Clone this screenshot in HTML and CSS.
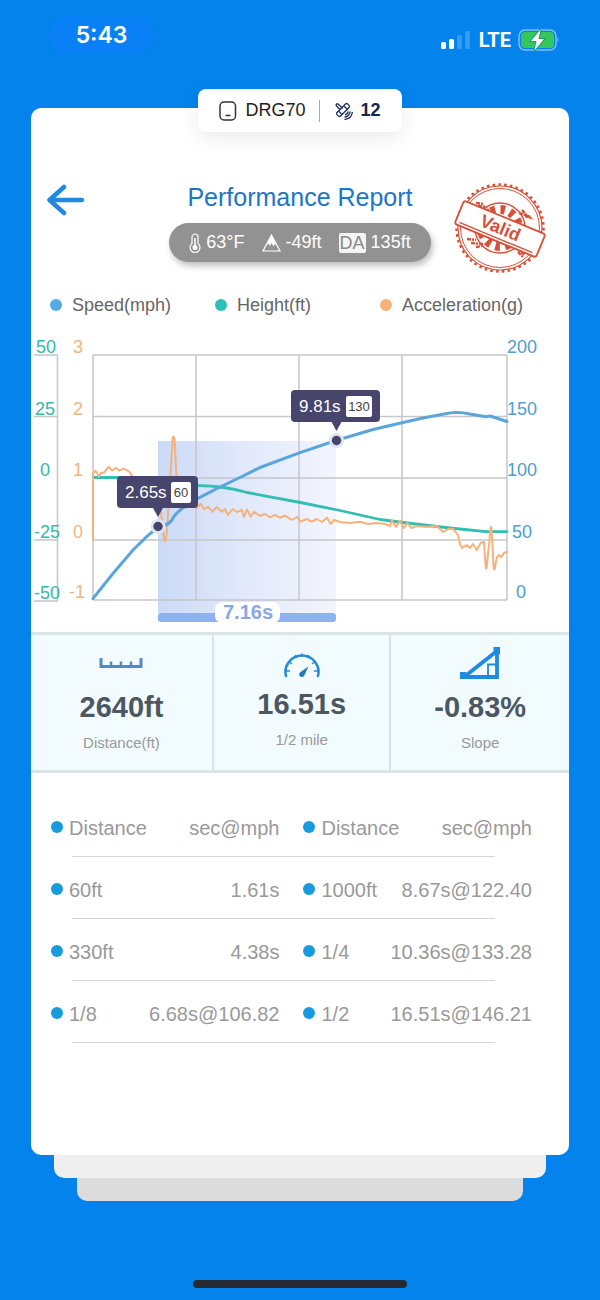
FILE: index.html
```html
<!DOCTYPE html>
<html lang="en">
    <head>
        <meta charset="utf-8">
        <meta name="viewport" content="width=device-width, initial-scale=1">
        <title>Performance Report</title>
        <link rel="stylesheet" href="styles.css">
    </head>

    <body>

        <div class="statusBar">
            <span class="clock">5:43</span>
            <div class="statusIcons">
                <svg class="signal" width="31" height="20" viewBox="0 0 31 20" fill="#fff">
                    <rect x="0" y="12" width="5" height="7" rx="1.5"/>
                    <rect x="8" y="9" width="5" height="10" rx="1.5"/>
                    <rect x="16" y="5" width="5" height="14" rx="1.5" opacity=".2"/>
                    <rect x="24" y="1" width="5" height="18" rx="1.5" opacity=".2"/>
                </svg>
                <span class="network">LTE</span>
                <svg width="42" height="24" viewBox="0 0 42 24">
                    <rect x="1" y="2" width="37" height="20" rx="6" fill="none" stroke="#7fc0ee" stroke-width="1.5"/>
                    <rect x="3" y="4" width="33" height="16" rx="4" fill="#34c759"/>
                    <path d="M39.5 9.500q2 2.500 0 5z" fill="#7fc0ee"/>
                    <path d="M22.5 1.5 13 13h5.5L16.5 22.5 26 11h-5.5z" fill="#fff" stroke="#1c9c7c" stroke-width="2" paint-order="stroke"/>
                </svg>
            </div>
        </div>

        <main class="card">

            <div class="deviceTab">
                <svg width="18" height="20" viewBox="0 0 18 20" fill="none" stroke="#333" stroke-width="1.5">
                    <rect x="1" y="1" width="15.5" height="18" rx="4"/>
                    <path d="M6.5 14.5h5"/>
                </svg>
                <span>DRG70</span>
                <span class="divider"></span>
                <svg width="18" height="18" viewBox="0 0 18 18" fill="none" stroke="#1d3158" stroke-width="1.3" stroke-linecap="round">
                    <rect x="-2.5" y="-7.5" width="5" height="15" rx="1.5" transform="translate(8 8) rotate(45)"/>
                    <path d="M5 7.500 1.500 4q-.8-1 0-1.800t1.800 0L7.500 6M9.500 4.500l3 3M4 9.500l3 3"/>
                    <path d="M10.500 12.500q2-.5 2.500-2.500M10 15q4-.5 5-5M10 17.300q6.500-.8 7.300-7"/>
                </svg>
                <b class="satellites">12</b>
            </div>

            <header class="reportHead">
                <button class="back" type="button" aria-label="Back">
                    <svg width="44" height="44" viewBox="0 0 44 44" fill="none" stroke="#2089e0" stroke-width="4.5" stroke-linecap="round" stroke-linejoin="round">
                        <path d="M35 22H3M17 9 2.500 22 17 35"/>
                    </svg>
                </button>

                <div class="heading">
                    <h1>Performance Report</h1>
                    <div class="conditions">
                        <span class="condition">
                            <svg width="12" height="20" viewBox="0 0 12 20" fill="none" stroke="#fff" stroke-width="1.2">
                                <path d="M3 10.500V4a3 3 0 0 1 6 0v6.500a5 5 0 1 1-6 0z"/>
                                <path d="M6 5v9" stroke-width="1.5"/>
                                <circle cx="6" cy="14.5" r="2.5" fill="#fff" stroke="none"/>
                            </svg>
                            63°F
                        </span>
                        <span class="condition">
                            <svg width="19" height="18" viewBox="0 0 19 18">
                                <path d="M9.500 1 18 17H1z" fill="none" stroke="#fff" stroke-width="1.2"/>
                                <path d="M9.500 1 4.500 11.500 6.500 9.500 8 12l1.500-3 2 3.500 1-2.500 2 1.500z" fill="#fff"/>
                            </svg>
                            -49ft
                        </span>
                        <span class="condition"><span class="da">DA</span> 135ft</span>
                    </div>
                </div>

                <svg class="stamp" width="104" height="102" viewBox="0 0 104 102" fill="none" stroke="#d6503a">
                    <circle cx="51" cy="50" r="43.5" stroke-width="2.5" stroke-dasharray="2.6 3.2"/>
                    <circle cx="51" cy="50" r="42" stroke-width="1.2"/>
                    <circle cx="51" cy="50" r="39.5" stroke-width="1"/>
                    <circle cx="51" cy="50" r="25" stroke-width="1.4"/>
                    <circle cx="51" cy="50" r="18.5" stroke-width="9" stroke-dasharray="4.5 5.180"/>
                    <path d="M27 25l8 1M29 28l9 1M33 31l7 1M70 35l12 4M73 32l6 7M76 38l8 3M18 61l9 1M22 65l12 1M27 69l6-1M66 69l10 8M69 74l5 5M71 71l7 1" stroke-width="2.4" stroke-dasharray="4 1 2 1"/>
                    <g transform="translate(51 51) rotate(22.5)">
                        <rect x="-44" y="-12.5" width="88" height="25" rx="2.5" fill="#fff" stroke-width="1.8"/>
                        <path d="M-40 9.500h79" stroke-width="1.4"/>
                        <text class="stampText" x="0" y="5" text-anchor="middle">Valid</text>
                    </g>
                </svg>
            </header>

            <ul class="legend">
                <li class="speed">Speed(mph)</li>
                <li class="height">Height(ft)</li>
                <li class="accel">Acceleration(g)</li>
            </ul>

            <svg class="chart" viewBox="31 316 538 316" role="img" aria-label="Speed, height and acceleration over time">
                <defs>
                    <linearGradient id="span">
                        <stop offset="0" stop-color="#cbdaf7"/>
                        <stop offset=".5" stop-color="#e2e9fb"/>
                        <stop offset="1" stop-color="#f3f5fe"/>
                    </linearGradient>
                </defs>

                <!-- highlighted 60-130 range -->
                <rect x="158" y="441" width="178" height="172" fill="url(#span)"/>

                <path class="grid" d="M93 355H507M93 416.500H507M93 478H507M93 540H507M93 600H507M93 355V600M196 355V600M299 355V600M402 355V600M507 355V600"/>
                <path class="grid" d="M57.500 355V601M34 355H58M34 416.500H58M34 540H58M34 601H58"/>

                <!-- height axis -->
                <g class="axis heightAxis">
                    <text x="46" y="353">50</text>
                    <text x="45" y="415">25</text>
                    <text x="45" y="476">0</text>
                    <text x="47" y="538">-25</text>
                    <text x="47" y="599">-50</text>
                </g>
                <!-- acceleration axis -->
                <g class="axis accelAxis">
                    <text x="78" y="353">3</text>
                    <text x="78" y="415">2</text>
                    <text x="78" y="476">1</text>
                    <text x="78" y="538">0</text>
                    <text x="77" y="598">-1</text>
                </g>
                <!-- speed axis -->
                <g class="axis speedAxis">
                    <text x="522" y="353">200</text>
                    <text x="522" y="415">150</text>
                    <text x="522" y="476">100</text>
                    <text x="522" y="538">50</text>
                    <text x="521" y="598">0</text>
                </g>

                <path class="line" stroke="#32beb2" stroke-width="2.8" d="M93 477.500H125C150 479 175 483 198 485.500Q225 486 247 492.500L303 503 340 510.500 380 519.500 403 522.500 450 528 486 531.700H507"/>
                <path class="line" stroke="#f6b27c" stroke-width="2" d="M93 540V473L95.300 470.700 97.700 474 98.700 477 101 472.700 104 472.700 108.700 466.700 112 470.700 115.700 467.700 119.300 470.700 123.300 468.700 129.300 471.700 132.700 476.700 145 480 157 490 162 520 164 538Q165.500 547 167 530L170.500 475 172.500 439Q173.500 434 174.500 439L176.500 477 180 500 185 508 190 504 196.700 508 200.700 503.700 204 509 208 507 212.700 511.700 216.700 507 221.700 511.700 225 509 228 515 232.700 509 236.700 512 242 510 244 517 247 509.500 250.700 516.700 254 511.700 260 516 265 514 270 517.300 275 515 280 517.700 285 515.700 291.700 520 297 517 300.700 521.700 306.700 519 311.700 521.700 316.700 519 322 522 327 517.700 330.700 524 334 520 340 522 350 523 360 521.700 368 524 377 523 385 524 390 526 391.700 520 396 527 400 520.700 404 528 407.300 523 411.700 528 416.700 526 426.700 527 436.700 526 443 532 448 529 453 528.700 458 535 460 544 462 548 466.700 545 470 548 473 544 476.700 550 480.700 543 484 542 485.500 564Q486.300 574 487.200 562L489.500 540Q491 516 492 536L493.500 566Q494.300 574 495.500 564L497 557 499.300 555 501.300 557.300 504 552.700 507 552"/>
                <path class="line" stroke="#5aa5db" stroke-width="3" d="M93 598.500L113 573.500 133 550 146.700 536.700 158 527 164 525.500Q169 524 172 520Q175 513 187 505L200 497.300 217 488.500 243 476 260 467.500 300 452.700 336 440.500 373 429.500 402 422.700 423 418 444 414Q457 411 470 414L486 416.700 490 416 507 421.500"/>

                <!-- elapsed time between the two markers -->
                <rect x="158" y="613" width="178" height="9" rx="3" fill="#8fb1ef"/>
                <rect x="215" y="602" width="65" height="21" rx="7" fill="#fff"/>
                <text class="elapsed" x="248" y="619">7.16s</text>

                <g class="marker">
                    <circle class="halo" cx="158" cy="526.5" r="7.5"/>
                    <circle cx="158" cy="526.5" r="4.7"/>
                    <rect x="117" y="476" width="81" height="32" rx="4"/>
                    <path d="M152.500 507h11l-5.500 10z"/>
                    <rect class="chip" x="171" y="482" width="20" height="21" rx="2"/>
                    <text class="time" x="125" y="498">2.65s</text>
                    <text class="chipText" x="181" y="497">60</text>
                </g>
                <g class="marker">
                    <circle class="halo" cx="336.5" cy="440.5" r="7.5"/>
                    <circle cx="336.5" cy="440.5" r="4.7"/>
                    <rect x="291" y="390" width="89" height="32" rx="4"/>
                    <path d="M331 421h11l-5.500 10z"/>
                    <rect class="chip" x="346" y="396" width="26" height="21" rx="2"/>
                    <text class="time" x="299" y="412">9.81s</text>
                    <text class="chipText" x="359" y="411">130</text>
                </g>
            </svg>

            <section class="metrics">
                <div class="metric">
                    <svg width="44" height="36" viewBox="0 0 44 36" fill="none" stroke="#5288c8">
                        <path d="M2 13v8.500h40V13" stroke-width="3"/>
                        <path d="M12 16.500V21M22 16.500V21M32 16.500V21" stroke-width="2.5"/>
                    </svg>
                    <strong>2640ft</strong>
                    <span>Distance(ft)</span>
                </div>
                <div class="metric raised">
                    <svg width="36" height="36" viewBox="0 0 36 36" fill="none" stroke="#2489d6" stroke-linecap="round">
                        <path d="M2 34A16.500 16.500 0 1 1 34 34" stroke-width="2.5"/>
                        <path d="M2.500 29h3M33.500 29h-3M5.500 20l2 1.500M30.500 20l-2 1.500M11.500 13.500l1 2M24.500 13.500l-1 2M18 12v2.500" stroke-width="1.5"/>
                        <path d="M24.500 24.500 20.500 33a2.700 2.700 0 1 1-4-3z" fill="#2479b8" stroke="none"/>
                    </svg>
                    <strong>16.51s</strong>
                    <span>1/2 mile</span>
                </div>
                <div class="metric">
                    <svg width="40" height="36" viewBox="0 0 40 36" fill="none" stroke="#1f8ae2">
                        <path d="M4 32H37V6z" stroke-width="3.8"/>
                        <path d="M37 19.500H28V31" stroke-width="1.8"/>
                        <path d="M0 27h6v7H0zM33.500 2h6.500v7.500h-6.500z" fill="#1f8ae2" stroke="none"/>
                    </svg>
                    <strong>-0.83%</strong>
                    <span>Slope</span>
                </div>
            </section>

            <table class="splits">
                <colgroup>
                    <col class="name"><col class="result"><col class="nameWide"><col class="result">
                </colgroup>
                <thead>
                    <tr><th scope="col">Distance</th><th scope="col">sec@mph</th><th scope="col">Distance</th><th scope="col">sec@mph</th></tr>
                </thead>
                <tbody>
                    <tr><td>60ft</td><td>1.61s</td><td>1000ft</td><td>8.67s@122.40</td></tr>
                    <tr><td>330ft</td><td>4.38s</td><td>1/4</td><td>10.36s@133.28</td></tr>
                    <tr><td>1/8</td><td>6.68s@106.82</td><td>1/2</td><td>16.51s@146.21</td></tr>
                </tbody>
            </table>

        </main>

        <div class="sheet"></div>
        <div class="sheet sheetBack"></div>

        <div class="homeBar"></div>

    </body>
</html>
```
FILE: styles.css
```css
* {
    box-sizing: border-box;
}

body {
    margin: 0;
    min-height: 100vh;
    display: flex;
    flex-direction: column;
    background-color: #0383eb;
    font-family: "Liberation Sans", Arial, sans-serif;
    font-size: 18px;
    color: #666;
}

svg {
    display: block;
    flex: none;
}

/* Status bar */

.statusBar {
    display: flex;
    justify-content: space-between;
    align-items: flex-start;
    height: 108px;
    padding: 17px 40px 0 50px;
    color: white;
    font-family: Inter, "Liberation Sans", sans-serif;
    font-weight: 600;
}

.clock {
    width: 103px;
    line-height: 36px;
    border-radius: 18px;
    background-color: #0a80f6;
    box-shadow: 0 0 4px #0a80f6;
    text-align: center;
    font-size: 23px;
}

.statusIcons {
    display: flex;
    align-items: center;
    gap: 7px;
    padding-top: 11px;
}

.network {
    font-family: Roboto, sans-serif;
    font-weight: 700;
    font-size: 20px;
    line-height: 24px;
}

/* Report card */

.card {
    flex: 1;
    margin: 0 31px;
    border-radius: 10px;
    background-color: white;
}

.deviceTab {
    display: flex;
    align-items: center;
    gap: 8px;
    width: fit-content;
    height: 43px;
    margin: -19px auto 0;
    padding: 0 21px;
    border-radius: 8px;
    background-color: white;
    box-shadow: 0 6px 20px rgba(0, 0, 0, 0.08);
    color: #222;
}

.divider {
    width: 1px;
    height: 22px;
    margin: 0 7px 0 5px;
    background-color: #aaa;
}

.satellites {
    color: #14264d;
}

.reportHead {
    display: grid;
    grid-template-columns: 1fr auto 1fr;
    align-items: start;
    margin-top: 46px;
    padding: 0 16px;
}

.back {
    justify-self: start;
    padding: 0;
    border: none;
    background: none;
    cursor: pointer;
}

.heading {
    display: flex;
    flex-direction: column;
    align-items: center;
}

.stamp {
    justify-self: end;
}

.stampText {
    font-size: 18px;
    font-weight: bold;
    fill: #d6503a;
    stroke: none;
}

h1 {
    margin: 4px 0 11px;
    font-size: 25px;
    line-height: 30px;
    font-weight: normal;
    color: #1b76c8;
}

.conditions {
    display: flex;
    align-items: center;
    gap: 17px;
    height: 39px;
    padding: 0 20px;
    border-radius: 20px;
    background-color: #929292;
    box-shadow: 2px 4px 6px rgba(0, 0, 0, 0.25);
    color: white;
}

.condition {
    display: flex;
    align-items: center;
    gap: 5px;
    white-space: nowrap;
}

.da {
    padding: 0 1px;
    border-radius: 2px;
    background-color: #f4f4f4;
    line-height: 20px;
    color: #888;
}

/* Chart */

.legend {
    display: grid;
    grid-template-columns: repeat(3, 1fr);
    margin: 14px 0 0;
    padding: 0 24px 0 19px;
    list-style: none;
    line-height: 22px;
}

.legend li {
    display: flex;
    align-items: center;
    gap: 10px;
}

.legend li::before {
    content: "";
    width: 12px;
    height: 12px;
    border-radius: 50%;
    background-color: currentColor;
}

.legend .speed::before {
    background-color: #57a9e2;
}

.legend .height::before {
    background-color: #2bc1b8;
}

.legend .accel::before {
    background-color: #f6b27c;
}

.chart {
    width: 100%;
    height: auto;
}

.grid {
    fill: none;
    stroke: #c6c6ca;
    stroke-width: 1.5px;
}

.line {
    fill: none;
    stroke-linejoin: round;
    stroke-linecap: round;
}

.axis {
    font-size: 18px;
    text-anchor: middle;
}

.heightAxis {
    fill: #35b9a9;
}

.accelAxis {
    fill: #f0b67f;
}

.speedAxis {
    fill: #4fa0cc;
}

.elapsed {
    font-size: 20px;
    font-weight: bold;
    text-anchor: middle;
    fill: #8aa8e6;
}

.marker {
    fill: #47456b;
}

.marker .halo {
    fill: #dfe6f3;
}

.marker .chip {
    fill: white;
}

.marker .time {
    font-size: 17px;
    fill: white;
}

.marker .chipText {
    font-size: 13px;
    text-anchor: middle;
    fill: #444;
}

/* Metrics */

.metrics {
    display: grid;
    grid-template-columns: 34% 33% 33%;
    height: 141px;
    border-top: 3px solid #d8e5e6;
    border-bottom: 3px solid #d8e5e6;
    background-color: #f2fcfe;
}

.metric {
    display: flex;
    flex-direction: column;
    align-items: center;
    padding-top: 10px;
    border-right: 2px solid #d8e5e6;
}

.metric:last-child {
    border-right: none;
}

.metric.raised {
    padding-top: 7px;
}

.metric strong {
    margin: 9px 0;
    font-size: 29px;
    line-height: 34px;
    color: #4d5761;
}

.metric span {
    font-size: 15px;
    line-height: 20px;
    color: #999;
}

/* Split times */

.splits {
    width: calc(100% - 57px);
    margin: 22px 37px 112px 20px;
    table-layout: fixed;
    border-collapse: collapse;
    font-size: 20px;
    color: #999;
}

.splits .name {
    width: 18%;
}

.splits .nameWide {
    width: 23%;
}

.splits tr {
    height: 62px;
    background: linear-gradient(#d4d4d4, #d4d4d4) 21px 100% / calc(100% - 58px) 1px no-repeat;
}

.splits th,
.splits td {
    padding: 4px 0 0;
    font-weight: normal;
    text-align: right;
    white-space: nowrap;
}

.splits th:nth-child(odd),
.splits td:nth-child(odd) {
    text-align: left;
}

.splits th:nth-child(3),
.splits td:nth-child(3) {
    padding-left: 24px;
}

.splits th:nth-child(odd)::before,
.splits td:nth-child(odd)::before {
    content: "";
    display: inline-block;
    width: 12px;
    height: 12px;
    margin-right: 6px;
    border-radius: 50%;
    background-color: #189bdc;
    vertical-align: 2px;
}

/* Sheets stacked under the card */

.sheet {
    height: 23px;
    margin: 0 54px;
    border-radius: 0 0 10px 10px;
    background-color: #efefef;
}

.sheetBack {
    margin: 0 77px;
    background-color: #dcdcdc;
}

.homeBar {
    width: 214px;
    height: 8px;
    margin: 79px auto 12px;
    border-radius: 4px;
    background-color: #252a33;
}
```
